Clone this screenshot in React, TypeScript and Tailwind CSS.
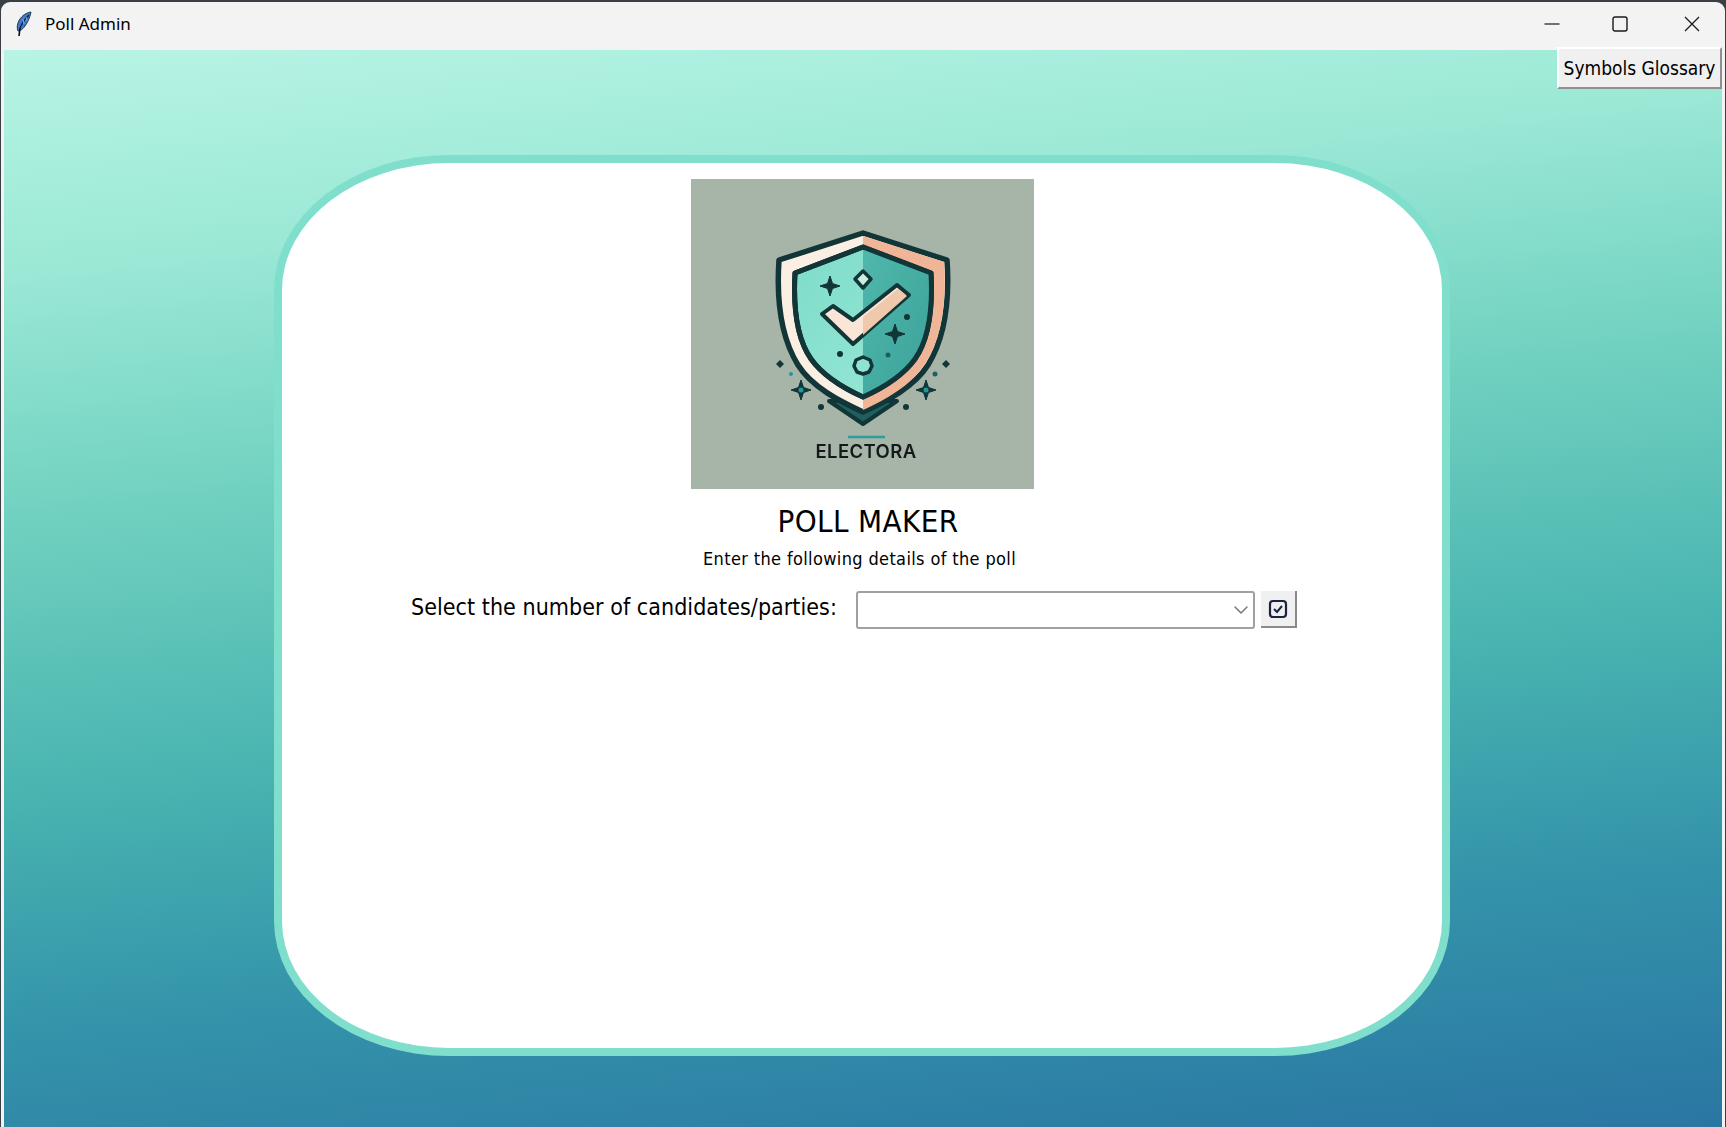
import { ChevronDown } from "lucide-react"

function Feather() {
  return (
    <svg width="18" height="26" viewBox="0 0 18 26" className="blur-[0.4px]">
      <path d="M16 1C10 2 5 6 3 12c-1 3-1 5 0 8 2 0 5-2 7-5 3-4 5-9 6-14z" fill="#3f78cc" stroke="#27364f" strokeWidth="1" />
      <path d="M14 4C10 8 7 12 5 17" stroke="#0f1d36" strokeWidth="1.2" fill="none" />
      <path d="M5 17l-1 8" stroke="#111" strokeWidth="1.6" fill="none" />
      <path d="M8 8l1 5M11 6l1 4" stroke="#9cc3ee" strokeWidth="0.8" fill="none" />
    </svg>
  )
}

function WindowControls() {
  return (
    <div className="flex items-center">
      <svg width="16" height="16" viewBox="0 0 16 16" className="mr-[52px]">
        <path d="M0.5 8h15" stroke="#1a1a1a" strokeWidth="1.2" />
      </svg>
      <svg width="16" height="16" viewBox="0 0 16 16" className="mr-[56px]">
        <rect x="1" y="1" width="14" height="14" rx="2" fill="none" stroke="#1a1a1a" strokeWidth="1.4" />
      </svg>
      <svg width="16" height="16" viewBox="0 0 16 16" className="mr-[25px]">
        <path d="M1 1l14 14M15 1L1 15" stroke="#1a1a1a" strokeWidth="1.3" />
      </svg>
    </div>
  )
}

// four pointed star used for the sparkles on the logo
function Sparkle({ x, y, r, fill = "#123537" }: { x: number; y: number; r: number; fill?: string }) {
  const w = r * 0.25
  return (
    <path
      d={`M${x} ${y - r}L${x + w} ${y - w}L${x + r} ${y}L${x + w} ${y + w}L${x} ${y + r}L${x - w} ${y + w}L${x - r} ${y}L${x - w} ${y - w}Z`}
      fill={fill}
      stroke={fill}
      strokeWidth="1"
    />
  )
}

function ElectoraLogo() {
  const inner = "M172 68 L104 94 C102 130 106 160 120 180 C133 198 152 209 172 218 C192 209 211 198 224 180 C238 160 242 130 240 94 Z"
  const outer = "M172 54 L88 81 C85 125 91 160 107 186 C121 208 148 222 172 233 C196 222 223 208 237 186 C253 160 259 125 256 81 Z"
  return (
    <svg viewBox="0 0 343 310" className="w-[343px] h-[310px] bg-[#a6b5a8] blur-[0.6px]">
      <defs>
        <clipPath id="inner">
          <path d={inner} />
        </clipPath>
        <linearGradient id="tealLeft" x1="0" y1="0" x2="1" y2="1">
          <stop offset="0" stopColor="#7edcc9" />
          <stop offset="1" stopColor="#98e8d6" />
        </linearGradient>
        <linearGradient id="tealRight" x1="0" y1="0" x2="1" y2="1">
          <stop offset="0" stopColor="#50b8ac" />
          <stop offset="1" stopColor="#3a9f98" />
        </linearGradient>
      </defs>
      <path d="M138 222 L172 245 L206 222 Z" fill="#1f5f5e" stroke="#123537" strokeWidth="4" strokeLinejoin="round" />
      <path d={outer} fill="#fbeee2" stroke="#123537" strokeWidth="5.5" strokeLinejoin="round" />
      <path d="M172 57 L253 83 C256 125 250 160 234 185 C220 206 196 220 172 231 Z" fill="#efb596" />
      <path d={inner} fill="url(#tealLeft)" stroke="#123537" strokeWidth="5" strokeLinejoin="round" />
      <g clipPath="url(#inner)">
        <rect x="172" y="60" width="80" height="170" fill="url(#tealRight)" />
      </g>
      <path d={inner} fill="none" stroke="#123537" strokeWidth="5" strokeLinejoin="round" />
      <path
        d="M131 135 L142 127 L162 141 L206 106 L218 116 L162 165 Z"
        fill="#f9e6d6"
        stroke="#123537"
        strokeWidth="4"
        strokeLinejoin="round"
      />
      <path d="M172 156 L216 117 L207 110 L172 138 Z" fill="#f0c8ab" />
      <Sparkle x={139} y={107} r={10} />
      <path d="M172 92l8 8-8 9-8-9z" fill="#c8efe2" stroke="#123537" strokeWidth="3.5" strokeLinejoin="round" />
      <Sparkle x={204} y={155} r={10} />
      <path d="M172 178l7 3 2 6-3 6-6 2-6-2-3-6 2-6z" fill="#8fe3d2" stroke="#123537" strokeWidth="3.5" strokeLinejoin="round" />
      <circle cx="216" cy="138" r="3" fill="#123537" />
      <circle cx="149" cy="175" r="3" fill="#123537" />
      <circle cx="197" cy="176" r="2.5" fill="#1f5f5e" />
      <path d="M89 181l4 4-4 4-4-4z" fill="#123537" />
      <path d="M255 181l4 4-4 4-4-4z" fill="#123537" />
      <circle cx="100" cy="195" r="2" fill="#1f9a9c" />
      <circle cx="244" cy="195" r="2.5" fill="#1f5f5e" />
      <Sparkle x={110} y={211} r={10} />
      <circle cx="110" cy="211" r="2.5" fill="#1a9c9c" />
      <Sparkle x={235} y={211} r={10} />
      <circle cx="235" cy="211" r="2.5" fill="#1a9c9c" />
      <circle cx="130" cy="228" r="3" fill="#123537" />
      <circle cx="215" cy="228" r="3" fill="#123537" />
      <path d="M157 258h37" stroke="#2a9d9d" strokeWidth="2.5" />
      <text x="175" y="279" textAnchor="middle" fontFamily="Inter, sans-serif" fontSize="18.5" fontWeight="600" letterSpacing="0.4" fill="#15191a">
        ELECTORA
      </text>
    </svg>
  )
}

export default function App() {
  return (
    <div className="relative flex flex-col h-[1127px] w-[1726px] overflow-hidden bg-[#3a3f45] px-[1px] font-['DejaVu_Sans',sans-serif] text-black">
      <div className="flex h-[48px] shrink-0 items-center justify-between rounded-t-[9px] mt-[2px] bg-[#f3f3f3] pl-[14px] pb-[5px]">
        <div className="flex items-center gap-[12px]">
          <Feather />
          <span className="font-['Noto_Sans',sans-serif] text-[17px]">Poll Admin</span>
        </div>
        <WindowControls />
      </div>

      <main className="flex flex-1 justify-center border-x-[3px] border-[#f3f3f3] bg-[linear-gradient(174deg,#b8f4e6_0%,#9ae8d5_18%,#6fd0bf_38%,#48b3b0_60%,#3494aa_78%,#2a76a3_100%)] pt-[105px] pb-[71px] pr-[2px]">
        <section className="flex h-[901px] w-[1176px] flex-col items-center rounded-[175px/135px] border-[8px] border-[#80dfcc] bg-white">
          <div className="mt-[16px]">
            <ElectoraLogo />
          </div>
          <h1 className="mt-[13px] ml-[12px] text-[31px] leading-[38px] tracking-[0.4px] [font-stretch:condensed]">POLL MAKER</h1>
          <p className="mt-[7px] -ml-[5px] text-[18px] leading-[24px] tracking-[0.36px] [font-stretch:condensed]">Enter the following details of the poll</p>
          <div className="mt-[20px] flex items-start -ml-[16px]">
            <label className="mr-[19px] text-[23px] leading-[32px] tracking-[0.05px] [font-stretch:condensed]">
              Select the number of candidates/parties:
            </label>
            <div className="flex h-[38px] w-[399px] items-center justify-end rounded-[3px] border-2 border-[#a0a0a0] bg-white">
              <ChevronDown size={24} strokeWidth={1.5} className="text-[#777]" />
            </div>
            <button className="ml-[6px] flex h-[37px] w-[36px] items-center justify-center border-r-2 border-b-2 border-[#8a8a8a] bg-[#f0f0f0]">
              <svg width="20" height="20" viewBox="0 0 20 20">
                <rect x="2" y="2" width="16" height="16" rx="3" fill="none" stroke="#1a2340" strokeWidth="2.2" />
                <path d="M6 10l3 3 5-6" fill="none" stroke="#1a2340" strokeWidth="2" />
              </svg>
            </button>
          </div>
        </section>
      </main>

      <button className="absolute top-[47px] right-[4px] h-[42px] w-[165px] border-t-2 border-l-2 border-t-white border-l-white border-r-2 border-b-2 border-r-[#8f8f8f] border-b-[#8f8f8f] bg-[#f0f0f0] text-[19px] [font-stretch:condensed]">
        Symbols Glossary
      </button>
    </div>
  )
}
